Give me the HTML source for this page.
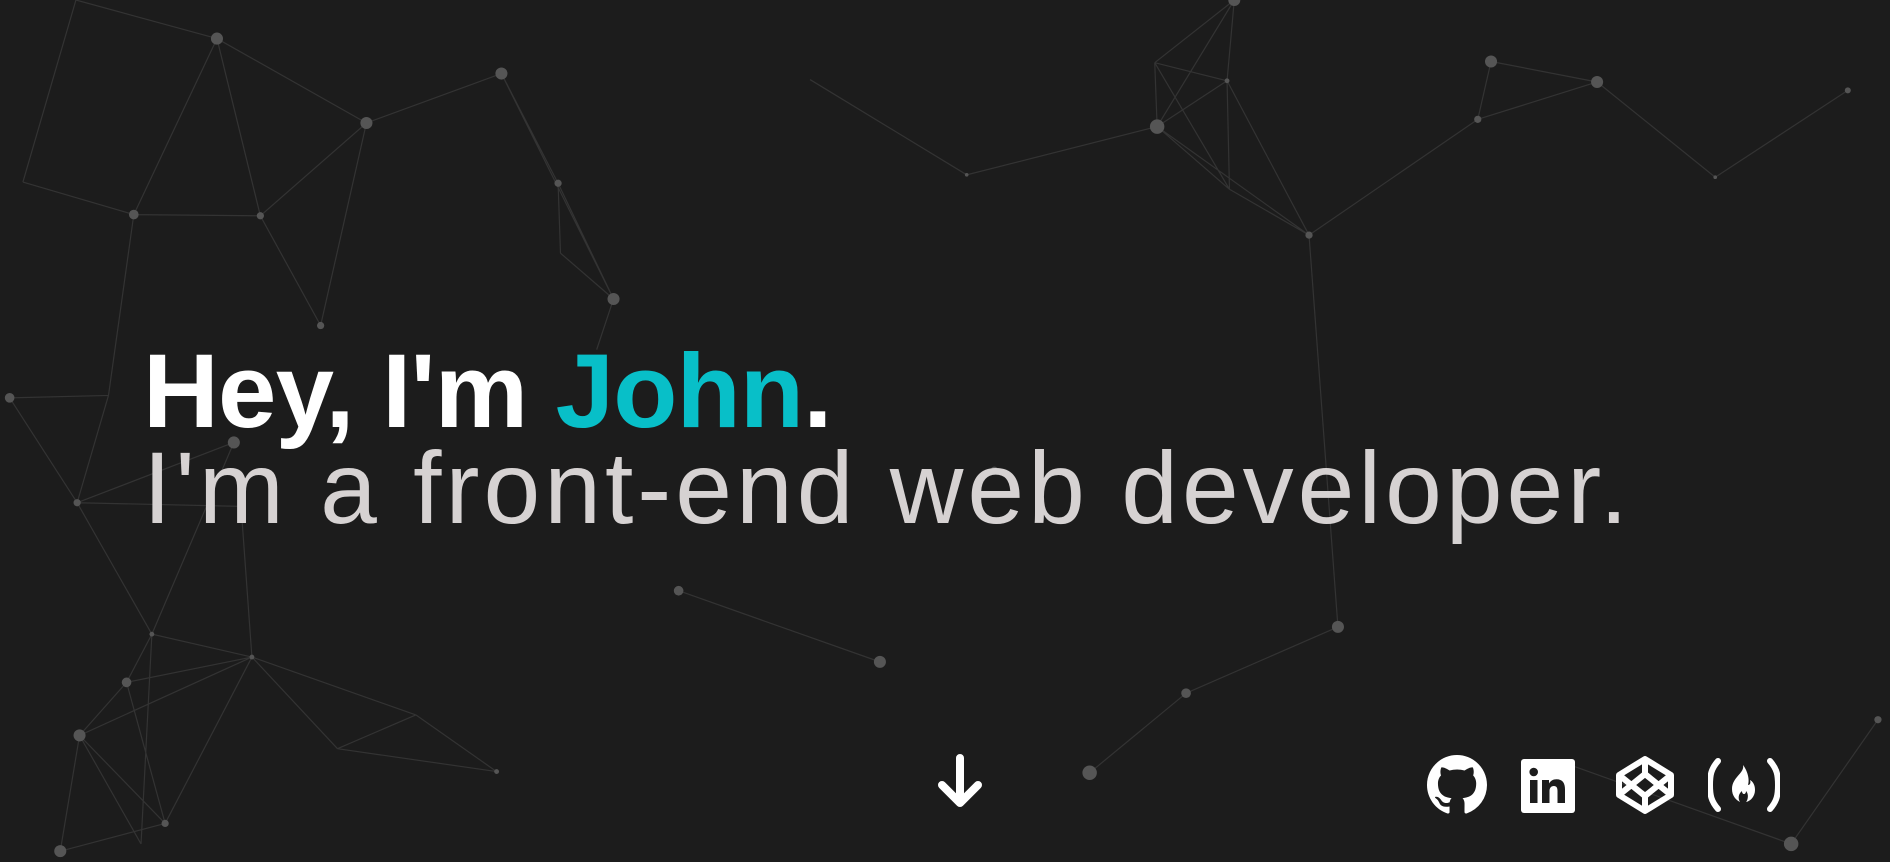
<!DOCTYPE html>
<html><head><meta charset="utf-8"><style>
html,body{margin:0;padding:0;background:#1c1c1c;width:1890px;height:862px;overflow:hidden;font-family:"Liberation Sans",sans-serif}
svg.bg{position:absolute;left:0;top:0}
.h1{position:absolute;left:143px;top:339px;font-size:105px;font-weight:bold;color:#fff;letter-spacing:-0.8px;line-height:1;white-space:nowrap}
.h1 span{color:#08bfc8}
.h2{position:absolute;left:143px;top:437px;font-size:102px;color:#d6d2d2;letter-spacing:4px;line-height:1;white-space:nowrap}
</style></head><body>
<svg class="bg" width="1890" height="862" viewBox="0 0 1568 715" preserveAspectRatio="none">
<g stroke="#333" stroke-width="1" fill="none">
<path d="M63,0L180,32M180,32L304,102M180,32L111,178M180,32L216,179M19,151L63,0M19,151L111,178M111,178L216,179M216,179L304,102M304,102L416,61M216,179L266,270M304,102L266,270M416,61L463,152M416,61L509,248M463,152L465,210M465,210L509,248M463,152L509,248M509,248L495,290M111,178L90,328M8,330L90,328M8,330L64,417M90,328L64,417M64,417L194,367M64,417L200,420M194,367L126,526M64,417L126,526M200,420L209,545M126,526L209,545M209,545L105,566M209,545L66,610M126,526L105,566M105,566L66,610M66,610L50,706M66,610L137,683M66,610L117,700M105,566L137,683M137,683L209,545M209,545L280,621M280,621L345,593M345,593L412,640M280,621L412,640M209,545L345,593M50,706L137,683M126,526L117,700M563,490L730,549M672,66L802,145L960,105"/>
<path d="M1024,0L958,52M1024,0L960,105M1024,0L1018,67M958,52L1018,67M958,52L960,105M960,105L1018,67M958,52L1020,157M960,105L1020,157M1018,67L1020,157M1018,67L1086,195M1020,157L1086,195M960,105L1086,195M1086,195L1226,99M1237,51L1325,68M1237,51L1226,99M1226,99L1325,68M1325,68L1423,147M1423,147L1533,75M1086,195L1110,520M1110,520L984,575M984,575L904,641M1486,700L1558,597M1486,700L1290,630"/>
</g>
<g fill="#555">
<circle cx="180" cy="32" r="5"/><circle cx="111" cy="178" r="4"/><circle cx="216" cy="179" r="3"/><circle cx="304" cy="102" r="5"/><circle cx="416" cy="61" r="5"/><circle cx="463" cy="152" r="3"/><circle cx="509" cy="248" r="5"/><circle cx="266" cy="270" r="3"/><circle cx="8" cy="330" r="4"/><circle cx="64" cy="417" r="3"/><circle cx="194" cy="367" r="5"/><circle cx="126" cy="526" r="2"/><circle cx="209" cy="545" r="2"/><circle cx="105" cy="566" r="4"/><circle cx="66" cy="610" r="5"/><circle cx="50" cy="706" r="5"/><circle cx="137" cy="683" r="3"/><circle cx="412" cy="640" r="2"/><circle cx="563" cy="490" r="4"/><circle cx="730" cy="549" r="5"/><circle cx="825" cy="390" r="3"/><circle cx="802" cy="145" r="1.5"/>
<circle cx="1024" cy="0" r="5"/><circle cx="960" cy="105" r="6"/><circle cx="1018" cy="67" r="2"/><circle cx="1086" cy="195" r="3"/><circle cx="1237" cy="51" r="5"/><circle cx="1325" cy="68" r="5"/><circle cx="1226" cy="99" r="3"/><circle cx="1423" cy="147" r="1.5"/><circle cx="1533" cy="75" r="2.5"/><circle cx="1110" cy="520" r="5"/><circle cx="984" cy="575" r="4"/><circle cx="904" cy="641" r="6"/><circle cx="1486" cy="700" r="6"/><circle cx="1558" cy="597" r="3"/>
</g>
</svg>
<div class="h1">Hey, I'm <span>John</span>.</div>
<div class="h2">I'm a front-end web developer.</div>
<svg style="position:absolute;left:935px;top:754px" width="50" height="56" viewBox="0 0 50 56"><path d="M25,4V47M7,31L25,49L43,31" stroke="#fff" stroke-width="8" stroke-linecap="round" stroke-linejoin="round" fill="none"/></svg>
<svg style="position:absolute;left:1427px;top:755px" width="60" height="60" viewBox="0 0 16 16"><path fill="#fff" d="M8 0C3.580 0 0 3.580 0 8c0 3.540 2.290 6.530 5.470 7.590.4.07.55-.17.55-.38 0-.19-.01-.82-.01-1.490-2.010.37-2.530-.49-2.690-.94-.09-.23-.48-.94-.82-1.130-.28-.15-.68-.52-.01-.53.63-.01 1.080.58 1.230.82.72 1.210 1.870.87 2.330.66.07-.52.28-.87.51-1.070-1.780-.2-3.640-.89-3.640-3.950 0-.87.31-1.590.82-2.150-.08-.2-.36-1.020.08-2.120 0 0 .67-.21 2.200.82.64-.18 1.320-.27 2-.27.68 0 1.360.09 2 .27 1.530-1.040 2.200-.82 2.200-.82.44 1.100.16 1.920.08 2.120.51.56.82 1.270.82 2.150 0 3.070-1.870 3.750-3.650 3.950.29.25.54.73.54 1.480 0 1.070-.01 1.930-.01 2.200 0 .21.15.46.55.38A8.013 8.013 0 0016 8c0-4.420-3.580-8-8-8z"/></svg>
<svg style="position:absolute;left:1521px;top:759px" width="54" height="54" viewBox="0 0 54 54"><rect width="54" height="54" rx="3" fill="#fff"/><rect x="9" y="21" width="7.5" height="23" fill="#1c1c1c"/><circle cx="12.7" cy="13" r="4.3" fill="#1c1c1c"/><path d="M21,21h7v3.5c1.5-2.5 4-4.2 7.5-4.2c6 0 8.5 3.8 8.5 10V44h-7.5V32c0-3.2-1-5-3.6-5c-2.8 0-4.4 2-4.4 5V44H21z" fill="#1c1c1c"/></svg>
<svg style="position:absolute;left:1614px;top:754px" width="62" height="62" viewBox="0 0 62 62" fill="none" stroke="#fff" stroke-width="6" stroke-linejoin="round"><path d="M31,5L57,21V41L31,57L5,41V21Z"/><path d="M31,5V20M31,42V57M5,21L31,42L57,21M5,41L31,20L57,41"/></svg>
<svg style="position:absolute;left:1708px;top:757px" width="72" height="56" viewBox="0 0 72 56" fill="#fff"><path d="M10,4C3,12 2,18 2,28s1,16 8,24" stroke="#fff" stroke-width="6" fill="none" stroke-linecap="round"/><path d="M62,4C69,12 70,18 70,28s-1,16-8,24" stroke="#fff" stroke-width="6" fill="none" stroke-linecap="round"/><path d="M35,8c2,8 -11,12 -11,24c0,7 4,11 8,13c-2,-3 -2,-8 2,-11c0,4 4,4 4,0c3,3 2,9 0,11c5,-1 9,-6 9,-12c0,-6 -3,-9 -5,-10c1,3 0,5 -2,5c2,-6 -1,-15 -5,-20z"/></svg>
</body></html>
